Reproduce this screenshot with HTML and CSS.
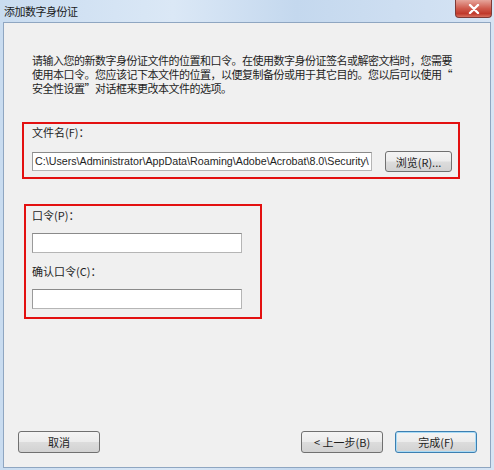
FILE: index.html
```html
<!DOCTYPE html>
<html lang="zh-CN">
<head>
  <meta charset="UTF-8" />
  <title>添加数字身份证</title>
  <link rel="stylesheet" href="styles.css">
</head>
<body>
  <div class="window">
    <div class="titlebar">
      <span class="title">添加数字身份证</span>
      <span class="close">
        <svg width="12" height="10" viewBox="0 0 12 10">
          <path d="M2 1 L10 9 M10 1 L2 9" stroke="#fff" stroke-width="2.4" stroke-linecap="round"/>
        </svg>
      </span>
    </div>

    <div class="client">
      <div class="intro">
        <div>请输入您的新数字身份证文件的位置和口令。在使用数字身份证签名或解密文档时，您需要</div>
        <div>使用本口令。您应该记下本文件的位置，以便复制备份或用于其它目的。您以后可以使用“</div>
        <div>安全性设置”对话框来更改本文件的选项。</div>
      </div>

      <div class="box box-file">
        <label class="lbl">文件名(F)：</label>
        <div class="file-row">
          <div class="field field-path">C:\Users\Administrator\AppData\Roaming\Adobe\Acrobat\8.0\Security\</div>
          <button class="btn btn-browse">浏览(R)...</button>
        </div>
      </div>

      <div class="box box-pass">
        <label class="lbl">口令(P)：</label>
        <div class="field field-short"></div>
        <label class="lbl lbl-2">确认口令(C)：</label>
        <div class="field field-short"></div>
      </div>

      <div class="footer">
        <button class="btn">取消</button>
        <div class="right">
          <button class="btn">&lt; 上一步(B)</button>
          <button class="btn btn-default">完成(F)</button>
        </div>
      </div>
    </div>
  </div>
</body>
</html>
```

FILE: styles.css
```css
body {
  margin: 0;
  font-family: "Noto Sans CJK SC", "Liberation Sans", sans-serif;
  font-size: 11px;
  color: #1e1e1e;
}

.window {
  width: 494px;
  height: 470px;
  box-sizing: border-box;
  display: flex;
  flex-direction: column;
  background: linear-gradient(90deg, #c9dcf0 0%, #dbe8f6 35%, #c4d8ee 60%, #d6e4f4 100%);
  padding: 0 3px 2px 3px;
}

.titlebar {
  height: 22px;
  display: flex;
  align-items: flex-start;
  justify-content: space-between;
  flex-shrink: 0;
}

.title {
  font-size: 11px;
  line-height: 22px;
  letter-spacing: -0.5px;
  margin-left: 1px;
  color: #1a1a1a;
}

.close {
  width: 35px;
  height: 17px;
  margin-right: -1px;
  border: 1px solid #7e3a36;
  border-top: none;
  border-radius: 0 0 4px 4px;
  background: linear-gradient(#e6a59b, #cf5a4c 50%, #c0392b 80%, #d8705e);
  display: flex;
  align-items: center;
  justify-content: center;
}

.client {
  flex: 1;
  background: #f0f0f0;
  border: 1px solid #8fa6c1;
  padding: 30px 0 0 28px;
  display: flex;
  flex-direction: column;
  min-height: 0;
}

.intro {
  line-height: 14px;
  height: 42px;
  white-space: nowrap;
  letter-spacing: -0.5px;
}

.intro div {
  height: 14px;
}

.box {
  border: 2px solid #e31010;
  box-sizing: border-box;
  flex-shrink: 0;
}

.box-file {
  width: 438px;
  height: 57px;
  margin: 27px 0 0 -10px;
  padding: 0 0 0 8px;
}

.lbl {
  display: block;
  line-height: 16px;
  height: 16px;
}

.file-row {
  display: flex;
  align-items: center;
  margin-top: 11px;
  gap: 13px;
}

.field {
  background: #fff;
  border: 1px solid #b5b5b5;
  border-top-color: #8a8a8a;
  border-left-color: #9a9a9a;
  box-sizing: border-box;
  height: 19px;
}

.field-path {
  width: 340px;
  overflow: hidden;
  white-space: nowrap;
  font-family: "Liberation Sans", sans-serif;
  font-size: 10.7px;
  line-height: 17px;
  padding-left: 2px;
}

.btn {
  font-family: "Noto Sans CJK SC", "Liberation Sans", sans-serif;
  font-size: 11px;
  color: #1e1e1e;
  width: 82px;
  height: 22px;
  padding: 0;
  border: 1px solid #707070;
  border-radius: 3px;
  background: linear-gradient(#f4f4f4 0%, #ececec 48%, #dcdcdc 52%, #d2d2d2 100%);
}

.btn-browse {
  width: 67px;
  height: 21px;
}

.btn-default {
  border-color: #3c7fb1;
  box-shadow: inset 0 0 0 1px #a9dbf6;
}

.box-pass {
  width: 238px;
  height: 115px;
  margin: 25px 0 0 -8px;
  padding: 1px 0 0 6px;
}

.field-short {
  width: 210px;
  height: 20px;
  margin-top: 10px;
}

.lbl-2 {
  margin-top: 10px;
}

.footer {
  display: flex;
  justify-content: space-between;
  margin: auto 0 0 -14px;
  padding: 0 13px 14px 0;
}

.right {
  display: flex;
  gap: 12px;
}
```
